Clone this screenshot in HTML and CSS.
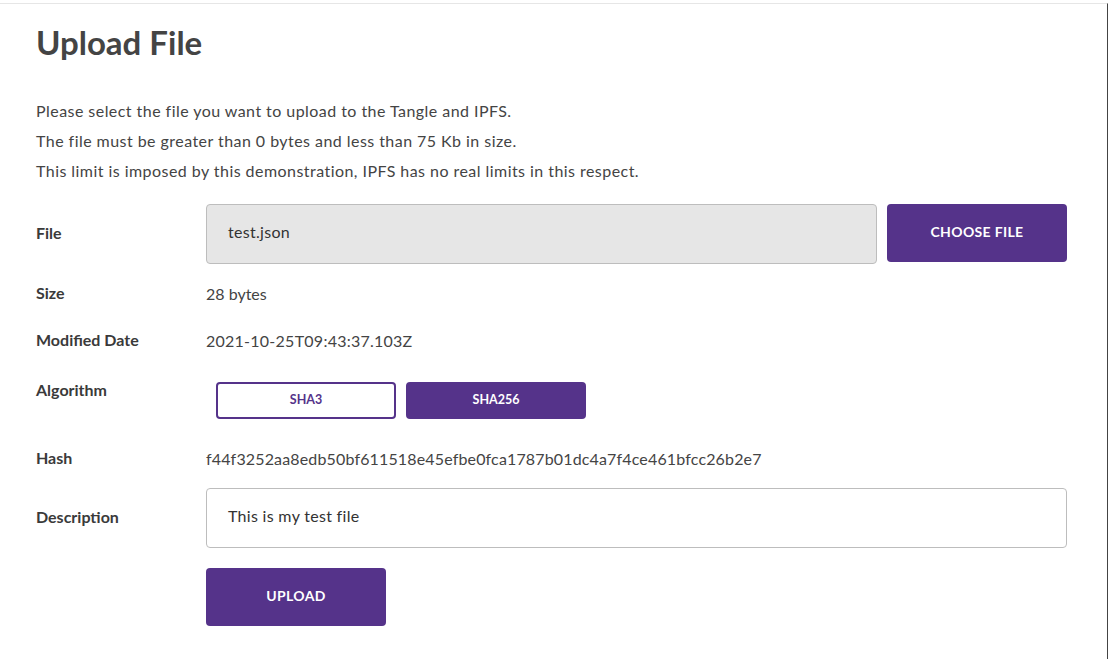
FILE: index.html
```html
<!DOCTYPE html>
<html>
<head>
<meta charset="utf-8">
<title>Upload File</title>
<link rel="stylesheet" href="styles.css">
</head>
<body>
<div class="frame">
  <main class="page">
    <h1 class="title">Upload File</h1>
    <div class="intro">
      <p>Please select the file you want to upload to the Tangle and IPFS.</p>
      <p>The file must be greater than 0 bytes and less than 75 Kb in size.</p>
      <p>This limit is imposed by this demonstration, IPFS has no real limits in this respect.</p>
    </div>
    <div class="form">
      <div class="row row-file">
        <div class="label">File</div>
        <div class="field-group">
          <div class="input input-readonly">test.json</div>
          <button class="btn btn-primary btn-choose">CHOOSE FILE</button>
        </div>
      </div>
      <div class="row row-size">
        <div class="label">Size</div>
        <div class="value">28 bytes</div>
      </div>
      <div class="row row-date">
        <div class="label">Modified Date</div>
        <div class="value date">2021-10-25T09:43:37.103Z</div>
      </div>
      <div class="row row-algo">
        <div class="label">Algorithm</div>
        <div class="algos">
          <button class="btn-algo btn-algo-outline">SHA3</button>
          <button class="btn-algo btn-algo-selected">SHA256</button>
        </div>
      </div>
      <div class="row row-hash">
        <div class="label">Hash</div>
        <div class="value hash">f44f3252aa8edb50bf611518e45efbe0fca1787b01dc4a7f4ce461bfcc26b2e7</div>
      </div>
      <div class="row row-desc">
        <div class="label">Description</div>
        <div class="input input-text">This is my test file</div>
      </div>
      <div class="row row-upload">
        <div class="label"></div>
        <button class="btn btn-primary btn-upload">UPLOAD</button>
      </div>
    </div>
  </main>
</div>
</body>
</html>
```

FILE: styles.css
```css
* { box-sizing: border-box; }
html, body {
  margin: 0;
  padding: 0;
  background: #ffffff;
}
body {
  font-family: "Lato", "Open Sans", sans-serif;
  color: #3d3d3d;
  width: 1108px;
  height: 659px;
  overflow: hidden;
}
.frame {
  width: 1108px;
  height: 659px;
  padding-top: 3px;
}
.page {
  height: 656px;
  width: 1108px;
  border-top: 1px solid #e6e6e6;
  border-right: 1px solid #444444;
  padding: 0 40px 0 36px;
}
.title {
  margin: 0;
  padding-top: 18px;
  font-size: 33px;
  line-height: 40px;
  font-weight: 700;
  color: #444444;
}
.intro {
  margin-top: 34px;
}
.intro p {
  margin: 0;
  font-size: 16px;
  line-height: 30px;
  letter-spacing: 0.45px;
  color: #444444;
}
.form {
  margin-top: 18px;
}
.row {
  display: flex;
  align-items: center;
}
.label {
  width: 170px;
  flex: 0 0 170px;
  font-size: 16px;
  font-weight: 700;
  color: #3a3a3a;
  padding-bottom: 3px;
}
.value {
  font-size: 16px;
  color: #444444;
  padding-bottom: 2px;
}
.date { letter-spacing: 0.25px; }
.hash { letter-spacing: 0.15px; }
.field-group {
  display: flex;
  flex: 1;
  gap: 10px;
  align-items: flex-start;
}
.input {
  flex: 1;
  height: 60px;
  border: 1px solid #bdbdbd;
  border-radius: 4px;
  display: flex;
  align-items: center;
  padding-left: 21px;
  padding-bottom: 5px;
  font-size: 16px;
  letter-spacing: 0.3px;
  color: #333333;
}
.input-readonly {
  background: #e6e6e6;
}
.input-text {
  background: #ffffff;
}
.btn {
  border: none;
  border-radius: 4px;
  background: #55338a;
  color: #ffffff;
  font-family: inherit;
  font-weight: 700;
  font-size: 14px;
  letter-spacing: 0.35px;
  width: 180px;
  height: 58px;
  padding: 0 0 4px 0;
  cursor: pointer;
}
.row-file { height: 60px; }
.row-size { margin-top: 20px; height: 20px; }
.row-date { margin-top: 27px; height: 20px; }
.row-algo {
  margin-top: 29px;
  height: 39px;
  align-items: flex-start;
}
.row-algo .label { line-height: 20px; }
.algos {
  display: flex;
  gap: 10px;
  margin-left: 10px;
  margin-top: 2px;
}
.btn-algo {
  width: 180px;
  height: 37px;
  border-radius: 4px;
  font-family: inherit;
  font-size: 12.5px;
  font-weight: 700;
  padding: 0 0 2px 0;
  cursor: pointer;
}
.btn-algo-outline {
  background: #ffffff;
  border: 2px solid #55338a;
  color: #55338a;
}
.btn-algo-selected {
  background: #55338a;
  border: 2px solid #55338a;
  color: #ffffff;
}
.row-hash { margin-top: 30px; height: 20px; }
.row-desc { margin-top: 19px; height: 60px; }
.row-upload { margin-top: 20px; height: 58px; }
```
